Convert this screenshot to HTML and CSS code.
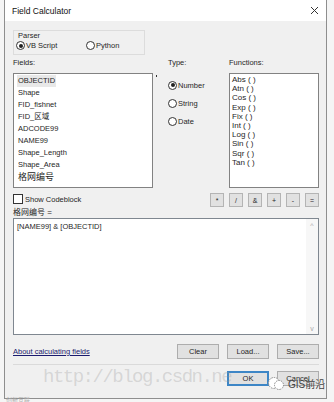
FILE: index.html
```html
<!DOCTYPE html>
<html>
<head>
<meta charset="utf-8">
<title>Field Calculator</title>
<link rel="stylesheet" href="styles.css">
</head>
<body>
<div class="screen">
<div class="window">
  <div class="titlebar">
    <span class="title">Field Calculator</span>
    <svg class="close" width="9" height="9" viewBox="0 0 9 9"><path d="M1 1L8 8M8 1L1 8" stroke="#333" stroke-width="1"/></svg>
  </div>
  <div class="dlg">
    <div class="parser">
      <div class="legend">Parser</div>
      <div class="parser-opts">
        <label class="opt vb"><span class="radio on"></span>VB Script</label>
        <label class="opt"><span class="radio"></span>Python</label>
      </div>
    </div>

    <div class="cols">
      <div class="col">
        <div class="lbl">Fields:</div>
        <ul class="list fields">
          <li class="sel">OBJECTID</li>
          <li>Shape</li>
          <li>FID_fishnet</li>
          <li>FID_区域</li>
          <li>ADCODE99</li>
          <li>NAME99</li>
          <li>Shape_Length</li>
          <li>Shape_Area</li>
          <li class="cjk">格网编号</li>
        </ul>
      </div>
      <div class="col">
        <div class="lbl">Type:</div>
        <div class="types">
          <label class="opt"><span class="radio on"></span>Number</label>
          <label class="opt"><span class="radio"></span>String</label>
          <label class="opt"><span class="radio"></span>Date</label>
        </div>
      </div>
      <div class="col">
        <div class="lbl">Functions:</div>
        <ul class="list funcs">
          <li>Abs ( )</li>
          <li>Atn ( )</li>
          <li>Cos ( )</li>
          <li>Exp ( )</li>
          <li>Fix ( )</li>
          <li>Int ( )</li>
          <li>Log ( )</li>
          <li>Sin ( )</li>
          <li>Sqr ( )</li>
          <li>Tan ( )</li>
        </ul>
      </div>
    </div>

    <div class="mid">
      <label class="check"><span class="box"></span>Show Codeblock</label>
      <div class="ops">
        <span class="op">*</span>
        <span class="op">/</span>
        <span class="op">&amp;</span>
        <span class="op">+</span>
        <span class="op">-</span>
        <span class="op">=</span>
      </div>
    </div>

    <div class="expr-lbl">格网编号 =</div>
    <div class="expr">
      <div class="expr-text">[NAME99] &amp; [OBJECTID]</div>
      <div class="scroll"><span class="up">^</span><span class="down">v</span></div>
    </div>

    <div class="actions">
      <a class="help" href="#">About calculating fields</a>
      <div class="btns">
        <span class="btn">Clear</span>
        <span class="btn">Load...</span>
        <span class="btn">Save...</span>
      </div>
    </div>
    <div class="sep"></div>
    <div class="footer">
      <span class="btn ok">OK</span>
      <span class="btn">Cancel</span>
    </div>
  </div>
</div>

<div class="wm-url">http://blog.csdn.ne</div>
<div class="wm-gis">
  <svg width="18" height="15" viewBox="0 0 18 15"><circle cx="7" cy="7" r="5.5" fill="#fff" stroke="#888" stroke-dasharray="1.5 1"/><circle cx="12" cy="9" r="4.5" fill="#fff" stroke="#888" stroke-dasharray="1.5 1"/></svg>
  <span>GIS前沿</span>
</div>
<div class="wm-corner">创新互联</div>
</div>
</body>
</html>
```

FILE: styles.css
```css
body{margin:0;background:#f5f5f5;}
.screen{position:relative;width:334px;height:402px;overflow:hidden;
font-family:"Liberation Sans","Noto Sans CJK SC",sans-serif;font-size:7.5px;color:#262626;}
.window{margin-left:4px;width:321px;height:398px;border:1px solid #8e8e8e;border-top:none;
background:#f0f0f0;display:flex;flex-direction:column;}
.titlebar{height:21px;background:#fff;display:flex;align-items:center;justify-content:space-between;
padding:0 7px 0 7px;}
.title{font-size:8.5px;color:#111;}
.close{display:block;}
.dlg{padding:9px 7px 0 8px;}

.parser{width:130px;height:23px;border:1px solid #dcdcdc;padding:0 0 0 0;}
.legend{margin:1px 0 0 4px;line-height:8px;}
.parser-opts{display:flex;margin-left:2px;line-height:11px;}
.parser-opts .vb{width:70px;}
.opt{display:flex;align-items:center;}
.radio{width:7px;height:7px;border:1px solid #333;border-radius:50%;margin-right:1px;
display:flex;align-items:center;justify-content:center;background:#fff;}
.radio.on:after{content:"";width:4px;height:4px;border-radius:50%;background:#222;}

.cols{display:grid;grid-template-columns:140px 46px 90px;column-gap:15px;margin-top:3px;}
.lbl{line-height:10px;height:10px;margin-bottom:5px;}
.list{list-style:none;margin:0;background:#fff;border:1px solid #828282;height:111px;}
.fields{padding:1px 4px;position:relative;}
.fields:after{content:"";position:absolute;right:-5px;top:1px;width:1px;height:2px;background:#333;}
.fields li{line-height:12px;height:12px;}
.fields li.sel{background:#e8e8e8;display:inline-block;padding:0 1px;margin-left:-1px;}
.fields li.cjk{font-size:9px;}
.funcs{padding:1px 2px;font-size:8px;}
.funcs li{line-height:9.2px;height:9.2px;}
.types{padding-top:3px;}
.types .opt{height:18px;margin-left:0;}

.mid{display:flex;justify-content:space-between;align-items:flex-start;margin-top:5px;}
.check{display:flex;align-items:center;margin-top:1px;}
.box{width:8px;height:8px;border:1px solid #333;background:#fff;margin-right:2px;}
.ops{display:flex;gap:5px;}
.op{width:12px;height:12px;border:1px solid #b4b4b4;background:#e1e1e1;display:flex;
align-items:center;justify-content:center;font-size:7px;}

.expr-lbl{font-size:8px;line-height:9px;height:9px;margin-top:1px;}
.expr{height:115px;border:1px solid #7f8790;background:#fff;margin-top:1px;display:flex;
justify-content:space-between;}
.expr-text{padding:3px 3px;line-height:9px;}
.scroll{width:12px;background:#f7f7f7;display:flex;flex-direction:column;justify-content:space-between;
align-items:center;color:#aaa;font-size:7px;padding:3px 0 2px;}

.actions{display:flex;justify-content:space-between;align-items:center;margin-top:9px;}
.help{color:#1a1a6e;text-decoration:underline;}
.btns,.footer{display:flex;gap:8px;}
.btn{width:40px;height:13px;border:1px solid #adadad;background:#e1e1e1;display:flex;
align-items:center;justify-content:center;}
.sep{height:1px;background:#dadada;margin-top:5px;}
.footer{justify-content:flex-end;margin-top:6px;}
.btn.ok{border-color:#3d86c6;box-shadow:inset 0 0 0 1px #3d86c6;}

.wm-url{position:absolute;left:43px;top:366px;font-family:"Liberation Mono",monospace;font-size:19px;
letter-spacing:-1.5px;color:rgba(150,150,150,0.3);}
.wm-gis{position:absolute;left:267px;top:376px;display:flex;align-items:center;gap:3px;
font-size:10px;color:#444;}
.wm-corner{position:absolute;left:6px;top:395px;font-size:6px;color:#b0b0b0;}
```
